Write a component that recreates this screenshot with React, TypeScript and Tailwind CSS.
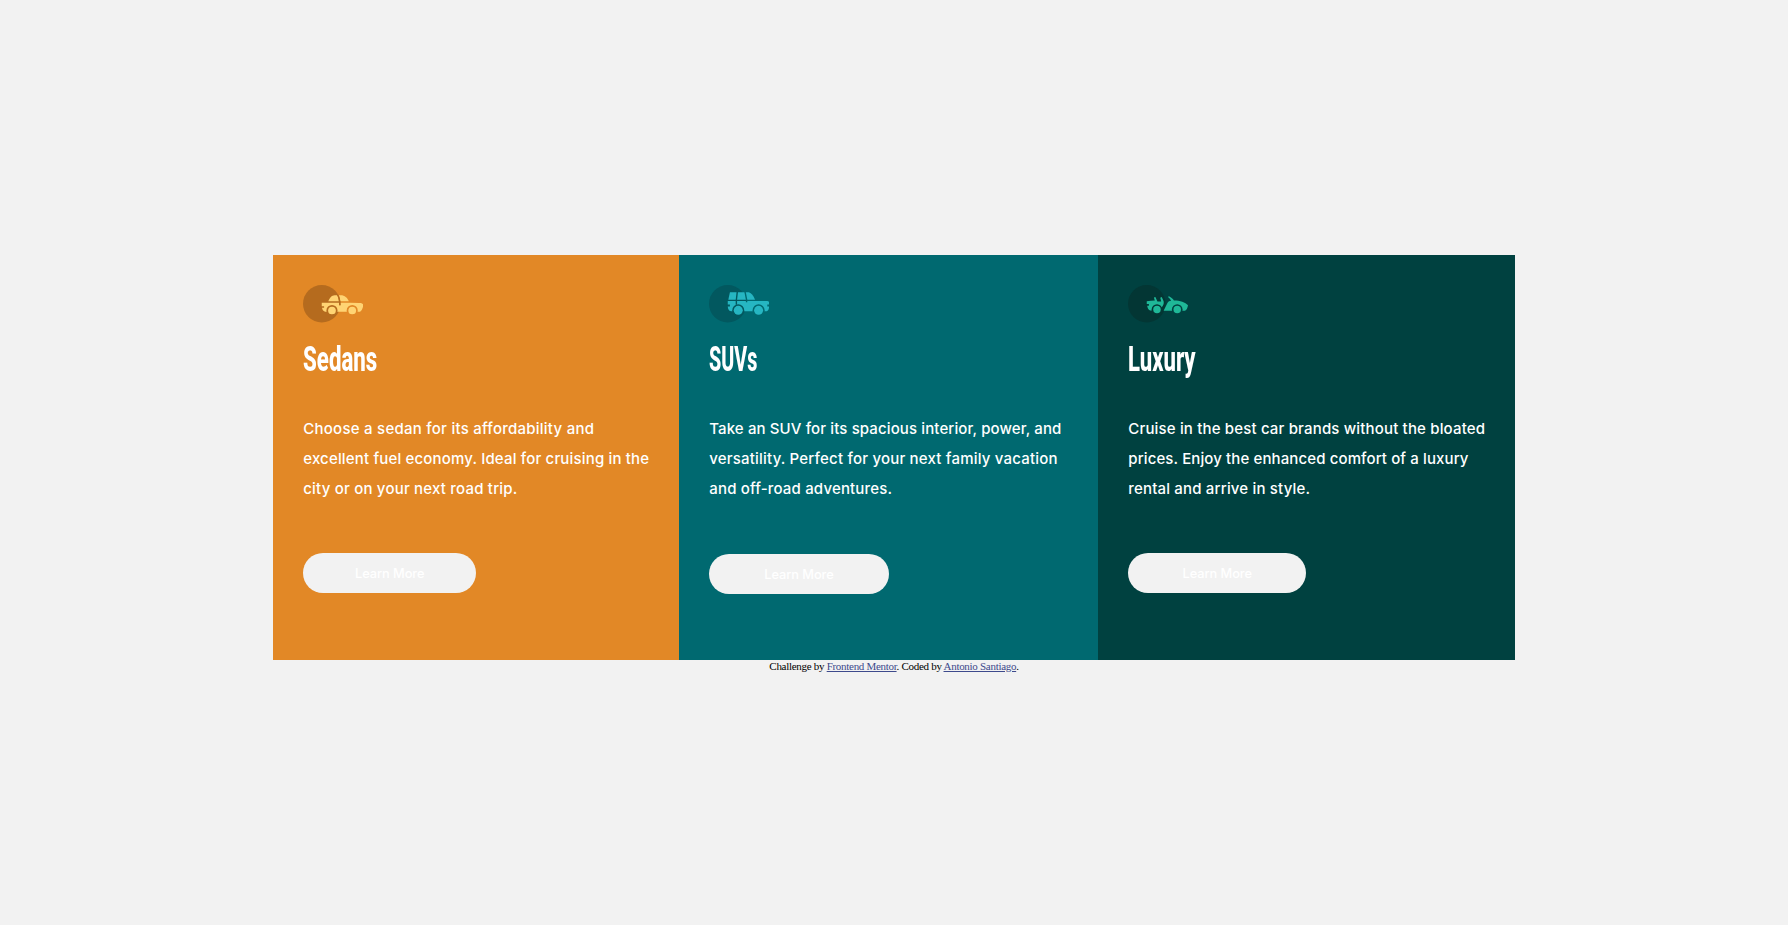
import type { ReactNode } from 'react';

function IconFrame({ shade, children }: { shade: string; children: ReactNode }) {
  return (
    <svg className="block h-[37.5px] w-[60px]" viewBox="0 0 64 40">
      <circle cx="20" cy="20" r="20" fill={shade} />
      {children}
    </svg>
  );
}

function SedanIcon() {
  return (
    <IconFrame shade="#b56b1e">
      <defs>
        <mask id="sedan-cut">
          <rect width="64" height="40" fill="#fff" />
          <circle cx="30.9" cy="27.2" r="5.9" fill="#000" />
          <circle cx="52.5" cy="27.2" r="5.9" fill="#000" />
          <path d="M36.6 9.5c2 2.5 2.6 5.500 2.7 12" fill="none" stroke="#000" strokeWidth="1.5" />
        </mask>
      </defs>
      <g fill="#ffd473">
        <g mask="url(#sedan-cut)">
          <path d="M26.9 17.3c1.5-3.2 3.5-6.4 7-6.4h6.4c4.3 0 6.8 2.5 8.6 6.4z" />
          <path d="M20 19h30l10 .3c2.5.1 4.6.8 4.200 2.600-.2 2.800-1.600 5.700-3.400 6.700H23.500c-2-.6-3-2.400-3.200-4.200h2.200v-1.800H20z" />
        </g>
        <circle cx="30.9" cy="27.2" r="4.1" />
        <circle cx="52.5" cy="27.2" r="4.1" />
      </g>
      <path d="M36.8 10.500c1.900 2.500 2.500 5 2.600 11" fill="none" stroke="#b56b1e" strokeWidth="1.5" />
    </IconFrame>
  );
}

function SuvIcon() {
  return (
    <IconFrame shade="#02585f">
      <defs>
        <mask id="suv-cut">
          <rect width="64" height="40" fill="#fff" />
          <circle cx="31.2" cy="27" r="6.4" fill="#000" />
          <circle cx="52.9" cy="27" r="6.4" fill="#000" />
          <path d="M30.200 7l-1 9v5M38.400 7l1.700 8.500v3" fill="none" stroke="#000" strokeWidth="1.5" />
        </mask>
      </defs>
      <g fill="#26b6c2">
        <g mask="url(#suv-cut)">
          <path d="M22.300 7.800h20.200c2.800.8 5 3.800 6.600 7.800H20.600z" />
          <path d="M20 17h42c1.500 0 2.200.8 2.200 2v1.800h-2v2h1.900c0 2.500-.7 4.500-2.600 5.200H24c-2.500-.3-3.800-2-4-5.200h2.300v-2H20z" />
        </g>
        <circle cx="31.2" cy="27" r="4.8" />
        <circle cx="52.9" cy="27" r="4.8" />
      </g>
    </IconFrame>
  );
}

function LuxuryIcon() {
  return (
    <IconFrame shade="#033634">
      <defs>
        <mask id="luxury-cut">
          <rect width="64" height="40" fill="#fff" />
          <circle cx="30.9" cy="26.2" r="5.7" fill="#000" />
          <circle cx="52.5" cy="26.2" r="5.7" fill="#000" />
        </mask>
      </defs>
      <g fill="#1fb898">
        <g mask="url(#luxury-cut)">
          <path d="M20 17.200c3-.4 5.600-.8 8.600-.8l-1-3 1.600-.6 2.200 4.700h4l-1-4 1.600-.6 2 4.500c.6 2.600-.4 4.300-2.200 6.600-.6 1-.7 1.800-.7 3.200H23.500c-1.700-.8-2.800-3-3-5.200h1.800v-1.700H20z" />
          <path d="M42.500 12.800l1.200-.9c2.600 1.300 4.200 2.700 5.300 4.500 6.500.2 12.200 1.600 15 5.100-.4 2.700-1.500 5-3.200 5.900H38l4.200-8.400c.8-1.400 2-2 3.800-2.200-.7-1.600-1.900-3-3.500-4z" />
        </g>
        <circle cx="30.9" cy="26.2" r="4" />
        <circle cx="52.5" cy="26.2" r="4" />
      </g>
    </IconFrame>
  );
}

interface CardProps {
  tone: string;
  icon: ReactNode;
  title: string;
  titleClass: string;
  lines: [string, string][];
  buttonClass: string;
}

function Card({ tone, icon, title, titleClass, lines, buttonClass }: CardProps) {
  return (
    <section className={`flex flex-col items-start px-[30px] pt-[30px] ${tone}`}>
      {icon}
      <h1
        className={`mt-[14px] origin-left font-[Roboto,sans-serif] text-[34.5px] leading-[44px] font-extrabold whitespace-nowrap ${titleClass}`}
      >
        {title}
      </h1>
      <p className="mt-[33px] text-[15px] leading-[30px] font-medium">
        {lines.map(([text, tracking]) => (
          <span key={text} className={`block whitespace-nowrap ${tracking}`}>
            {text}
          </span>
        ))}
      </p>
      <button
        className={`rounded-[20px] bg-[#f2f2f2] pt-[2px] text-[12.8px] font-medium tracking-[-0.05px] text-white ${buttonClass}`}
      >
        Learn More
      </button>
    </section>
  );
}

export default function App() {
  return (
    <div className="flex min-h-screen flex-col items-center justify-center bg-[#f2f2f2] pt-[2px] font-[Inter,sans-serif] text-white">
      <main className="grid h-[405px] grid-cols-[406px_419px_416.5px]">
        <Card
          tone="bg-[#e28826]"
          icon={<SedanIcon />}
          title="Sedans"
          titleClass="scale-x-[0.645]"
          lines={[
            ['Choose a sedan for its affordability and', 'tracking-[0.25px]'],
            ['excellent fuel economy. Ideal for cruising in the', 'tracking-[0.167px]'],
            ['city or on your next road trip.', 'tracking-[0.2px]'],
          ]}
          buttonClass="mt-[49px] h-[40px] w-[173px]"
        />
        <Card
          tone="bg-[#006970]"
          icon={<SuvIcon />}
          title="SUVs"
          titleClass="scale-x-[0.57]"
          lines={[
            ['Take an SUV for its spacious interior, power, and', 'tracking-[0.118px]'],
            ['versatility. Perfect for your next family vacation', 'tracking-[0.198px]'],
            ['and off-road adventures.', 'tracking-[0.17px]'],
          ]}
          buttonClass="mt-[50px] h-[40px] w-[179.5px]"
        />
        <Card
          tone="bg-[#004140]"
          icon={<LuxuryIcon />}
          title="Luxury"
          titleClass="scale-x-[0.64]"
          lines={[
            ['Cruise in the best car brands without the bloated', 'tracking-[0.165px]'],
            ['prices. Enjoy the enhanced comfort of a luxury', 'tracking-[0.115px]'],
            ['rental and arrive in style.', 'tracking-[0.178px]'],
          ]}
          buttonClass="mt-[49.5px] h-[40px] w-[178px]"
        />
      </main>
      <footer className="h-[12px] text-center font-['Liberation_Serif',serif] text-[11px] leading-[12px] tracking-[-0.29px] text-black">
        Challenge by <a className="text-[#3e4a8c] underline">Frontend Mentor</a>. Coded by{' '}
        <a className="text-[#3e4a8c] underline">Antonio Santiago</a>.
      </footer>
    </div>
  );
}
